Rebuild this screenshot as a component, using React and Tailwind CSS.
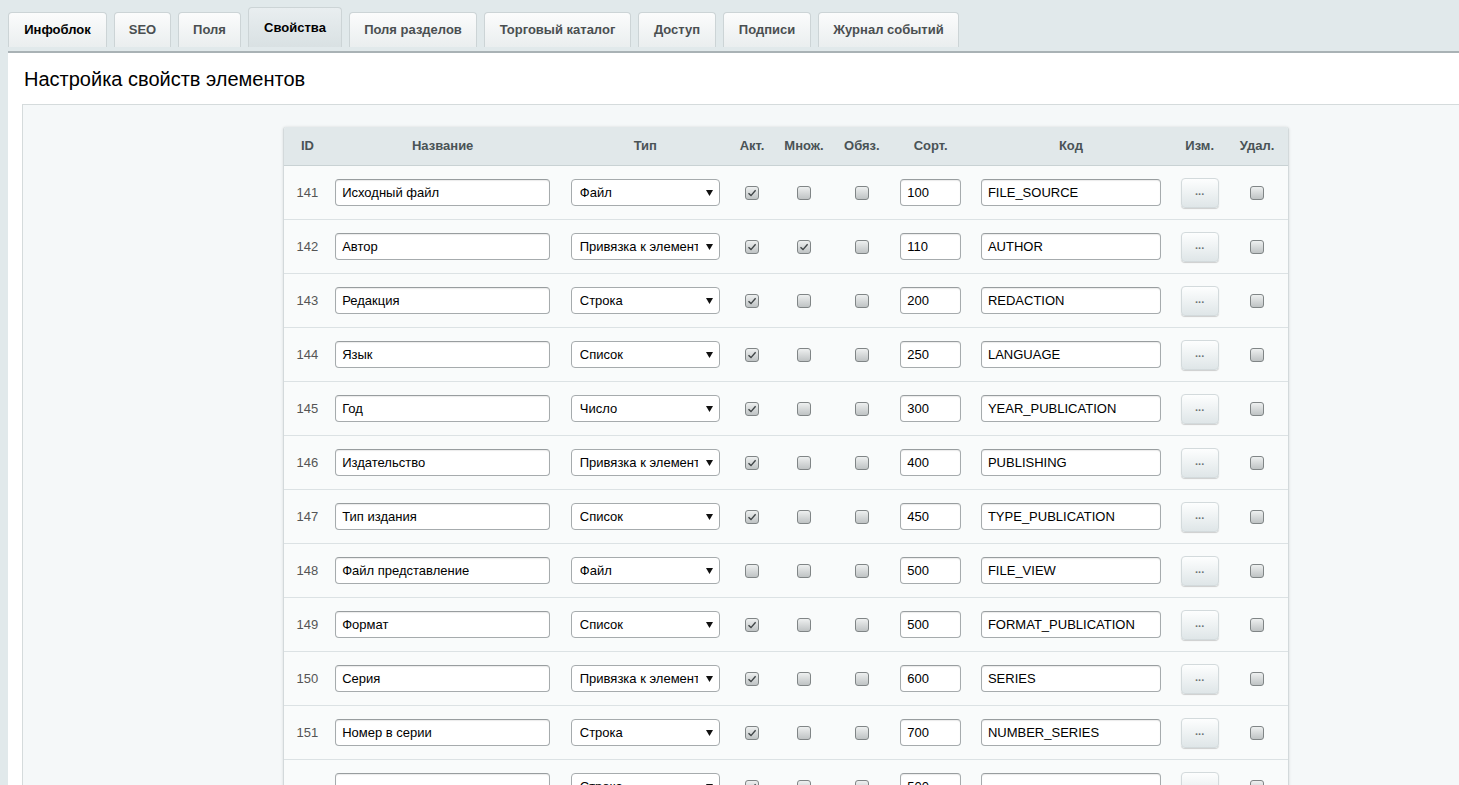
import React from 'react';

const tabs = [
    { label: 'Инфоблок', w: 'w-[99px]', cls: 'text-black' },
    { label: 'SEO', w: 'w-[57px]' },
    { label: 'Поля', w: 'w-[63px]' },
    { label: 'Свойства', w: 'w-[94px]', active: true },
    { label: 'Поля разделов', w: 'w-[128px]' },
    { label: 'Торговый каталог', w: 'w-[147px]' },
    { label: 'Доступ', w: 'w-[78px]' },
    { label: 'Подписи', w: 'w-[88px]' },
    { label: 'Журнал событий', w: 'w-[141px]' },
];

const LINK = 'Привязка к элементам';

const rows = [
    { id: 141, name: 'Исходный файл', type: 'Файл', act: true, sort: 100, code: 'FILE_SOURCE' },
    { id: 142, name: 'Автор', type: LINK, act: true, mult: true, sort: 110, code: 'AUTHOR' },
    { id: 143, name: 'Редакция', type: 'Строка', act: true, sort: 200, code: 'REDACTION' },
    { id: 144, name: 'Язык', type: 'Список', act: true, sort: 250, code: 'LANGUAGE' },
    { id: 145, name: 'Год', type: 'Число', act: true, sort: 300, code: 'YEAR_PUBLICATION' },
    { id: 146, name: 'Издательство', type: LINK, act: true, sort: 400, code: 'PUBLISHING' },
    { id: 147, name: 'Тип издания', type: 'Список', act: true, sort: 450, code: 'TYPE_PUBLICATION' },
    { id: 148, name: 'Файл представление', type: 'Файл', act: false, sort: 500, code: 'FILE_VIEW' },
    { id: 149, name: 'Формат', type: 'Список', act: true, sort: 500, code: 'FORMAT_PUBLICATION' },
    { id: 150, name: 'Серия', type: LINK, act: true, sort: 600, code: 'SERIES' },
    { id: 151, name: 'Номер в серии', type: 'Строка', act: true, sort: 700, code: 'NUMBER_SERIES' },
    { id: '', name: '', type: 'Строка', act: true, sort: 500, code: '' },
];

// column widths, header and body share them
const cols = ['w-[47px]', 'w-[224px]', 'w-[182px]', 'w-[32px]', 'w-[72px]', 'w-[44px]', 'w-[94px]', 'w-[187px]', 'w-[71px]', 'w-[44px]'];
const heads = ['ID', 'Название', 'Тип', 'Акт.', 'Множ.', 'Обяз.', 'Сорт.', 'Код', 'Изм.', 'Удал.'];

const Checkbox = ({ checked }) => (
    <div className="w-[14px] h-[14px] rounded-[3px] border border-[#808586] bg-gradient-to-b from-[#eef0f0] to-[#bfc3c4] flex items-center justify-center">
        {checked && (
            <svg width="10" height="10" viewBox="0 0 10 10">
                <path d="M1.5 5.2 L4 7.6 L8.6 2.2" fill="none" stroke="#3f4446" strokeWidth="1.4" />
            </svg>
        )}
    </div>
);

const TextBox = ({ value, w }) => (
    <div className={`${w} h-[27px] rounded-[4px] border border-[#a6abad] border-t-[#989d9f] bg-white shadow-[inset_0_1px_1px_rgba(0,0,0,0.08)] px-[6px] text-[13px] leading-[25px] text-black whitespace-nowrap overflow-hidden`}>
        {value}
    </div>
);

const Select = ({ value }) => (
    <div className="w-[149px] h-[27px] rounded-[4px] border border-[#a6abad] bg-white flex items-center pl-[8px] pr-[6px] text-[13px] text-black">
        <span className="flex-1 whitespace-nowrap overflow-hidden">{value}</span>
        <svg width="7" height="6" viewBox="0 0 7 6" className="ml-[8px] shrink-0">
            <path d="M0 0 H7 L3.5 6 Z" fill="#111" />
        </svg>
    </div>
);

const App = () => {
    return (
        <div className="min-h-screen bg-[#e1e9eb] font-['Liberation_Sans',Arial,sans-serif] overflow-hidden">
            <div className="flex items-end gap-[7px] pl-[8px] h-[47px]">
                {tabs.map((t) => (
                    <div
                        key={t.label}
                        className={`${t.w} ${t.active ? 'h-[40px] bg-gradient-to-b from-[#e9eef0] to-[#d9e1e3] text-black' : 'h-[35px] bg-gradient-to-b from-[#fbfcfc] to-[#eaeeef] ' + (t.cls || 'text-[#4a4f51]')} rounded-t-[4px] border border-b-0 border-[#ccd4d6] flex items-center justify-center text-[13px] font-bold`}
                    >
                        {t.label}
                    </div>
                ))}
            </div>

            <div className="mt-[4px] ml-[8px] bg-white border-t-2 border-[#a9b2b5]">
                <div className="h-[51px] flex items-center pl-[16px] text-[20px] text-black pt-[1px]">
                    Настройка свойств элементов
                </div>

                <div className="ml-[14px] border-t border-l border-[#d5dbdc] bg-[#f5f8f9] pt-[22px] pl-[260px] pb-[40px]">
                    <div className="w-[1006px] border-x border-[#d3d9db] shadow-[0_0_3px_rgba(0,0,0,0.12)] rounded-t-[3px] overflow-hidden">
                        <div className="h-[39px] flex items-center bg-[#e1e8ea] border-b border-[#c9d2d4] pr-[9px]">
                            {heads.map((h, i) => (
                                <div key={h} className={`${cols[i]} flex justify-center text-[13px] font-bold text-[#4a5356] whitespace-nowrap`}>
                                    {h}
                                </div>
                            ))}
                        </div>

                        {rows.map((r, idx) => (
                            <div key={idx} className="h-[54px] flex items-center bg-[#f9fbfb] border-b border-[#dce2e4] pr-[9px]">
                                <div className={`${cols[0]} flex justify-center text-[13px] text-[#555]`}>{r.id}</div>
                                <div className={`${cols[1]} flex justify-center`}>
                                    <TextBox value={r.name} w="w-[215px]" />
                                </div>
                                <div className={`${cols[2]} flex justify-center`}>
                                    <Select value={r.type} />
                                </div>
                                <div className={`${cols[3]} flex justify-center`}>
                                    <Checkbox checked={r.act} />
                                </div>
                                <div className={`${cols[4]} flex justify-center`}>
                                    <Checkbox checked={r.mult} />
                                </div>
                                <div className={`${cols[5]} flex justify-center`}>
                                    <Checkbox />
                                </div>
                                <div className={`${cols[6]} flex justify-center`}>
                                    <TextBox value={r.sort} w="w-[61px]" />
                                </div>
                                <div className={`${cols[7]} flex justify-center`}>
                                    <TextBox value={r.code} w="w-[180px]" />
                                </div>
                                <div className={`${cols[8]} flex justify-center`}>
                                    <div className="w-[38px] h-[30px] rounded-[4px] border border-[#d3dadc] bg-gradient-to-b from-[#fdfefe] to-[#dfe6e8] shadow-[0_1px_1px_rgba(0,0,0,0.18)] flex items-center justify-center text-[11px] font-bold text-[#6b7376] leading-none pb-[3px]">
                                        ...
                                    </div>
                                </div>
                                <div className={`${cols[9]} flex justify-center`}>
                                    <Checkbox />
                                </div>
                            </div>
                        ))}
                    </div>
                </div>
            </div>
        </div>
    );
};

export default App;
